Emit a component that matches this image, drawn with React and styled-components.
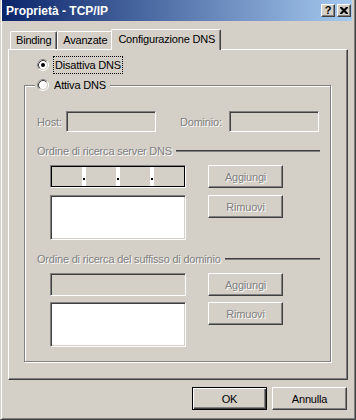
import React from "react";
import styled, { createGlobalStyle } from "styled-components";

const GlobalStyle = createGlobalStyle`
  html, body {
    margin: 0;
    padding: 0;
    background: #d4d0c8;
  }
  body {
    font-family: "Liberation Sans", Arial, sans-serif;
    font-size: 11px;
    letter-spacing: -0.2px;
    color: #000;
  }
  * {
    box-sizing: border-box;
  }
`;

const Radio = ({ checked }) => (
  <RadioMark width="12" height="12" viewBox="0 0 12 12">
    <circle cx="6" cy="6" r="4.2" fill="#fff" />
    <circle cx="6" cy="6" r="5.5" fill="none" stroke="#fff" />
    <path d="M9.89 2.11 A5.5 5.5 0 0 0 2.11 9.89" fill="none" stroke="#808080" />
    <circle cx="6" cy="6" r="4.5" fill="none" stroke="#d4d0c8" />
    <path d="M9.18 2.82 A4.5 4.5 0 0 0 2.82 9.18" fill="none" stroke="#404040" />
    {checked && <circle cx="6" cy="6" r="2" fill="#000" />}
  </RadioMark>
);

const IpAddress = () => (
  <IpBox>
    <IpSegment />
    <IpDot />
    <IpSegment />
    <IpDot />
    <IpSegment />
    <IpDot />
    <IpSegment />
  </IpBox>
);

const App = () => {
  return (
    <>
      <GlobalStyle />
      <Window>
        <TitleBar>
          <Title>Proprietà - TCP/IP</Title>
          <CaptionButton>?</CaptionButton>
          <CaptionButton $gap>
            <svg width="8" height="7" viewBox="0 0 8 7">
              <path
                d="M0 0h2l2 2 2-2h2v1L5.5 3.5 8 6v1H6L4 5 2 7H0V6l2.5-2.5L0 1z"
                fill="#000"
              />
            </svg>
          </CaptionButton>
        </TitleBar>

        <Body>
          <TabStrip>
            <Tab>Binding</Tab>
            <Tab>Avanzate</Tab>
            <Tab $active>Configurazione DNS</Tab>
          </TabStrip>

          <Panel>
            <RadioRow>
              <Radio checked />
              <RadioLabel $focused>Disattiva DNS</RadioLabel>
            </RadioRow>

            <GroupBox>
              <Legend>
                <Radio />
                <RadioLabel>Attiva DNS</RadioLabel>
              </Legend>

              <FieldRow $top={19}>
                <DisabledLabel $width={29}>Host:</DisabledLabel>
                <TextBox $width={90} />
                <DisabledLabel $width={49} $indent={24}>
                  Dominio:
                </DisabledLabel>
                <TextBox $width={90} />
              </FieldRow>

              <SectionHeader $top={12}>
                <DisabledLabel>Ordine di ricerca server DNS</DisabledLabel>
                <SectionRule />
              </SectionHeader>

              <ControlRow $top={7}>
                <IpAddress />
                <PushButton disabled>Aggiungi</PushButton>
              </ControlRow>
              <ControlRow $top={7}>
                <ListBox />
                <PushButton disabled>Rimuovi</PushButton>
              </ControlRow>

              <SectionHeader $top={12}>
                <DisabledLabel>Ordine di ricerca del suffisso di dominio</DisabledLabel>
                <SectionRule />
              </SectionHeader>

              <ControlRow $top={7}>
                <TextBox $width={136} $height={23} />
                <PushButton disabled>Aggiungi</PushButton>
              </ControlRow>
              <ControlRow $top={6}>
                <ListBox />
                <PushButton disabled>Rimuovi</PushButton>
              </ControlRow>
            </GroupBox>
          </Panel>

          <Footer>
            <PushButton $default>OK</PushButton>
            <PushButton>Annulla</PushButton>
          </Footer>
        </Body>
      </Window>
    </>
  );
};

export default App;

const Window = styled.div`
  width: 356px;
  height: 420px;
  display: flex;
  flex-direction: column;
  background: #d4d0c8;
  border-left: 1px solid #d4d0c8;
  border-right: 1px solid #404040;
  border-bottom: 1px solid #404040;
  box-shadow: inset 1px 0 #fff, inset -1px -1px #808080;
  padding: 0 3px 0 1px;
`;

const TitleBar = styled.div`
  height: 21px;
  flex: none;
  display: flex;
  align-items: center;
  padding: 0 1px 0 4px;
  background: linear-gradient(90deg, #0a246a 0%, #a6caf0 100%);
  color: #fff;
`;

const Title = styled.div`
  flex: 1;
  font-weight: bold;
  font-size: 12px;
  letter-spacing: 0;
`;

const CaptionButton = styled.div`
  width: 14px;
  height: 13px;
  margin-left: ${(p) => (p.$gap ? "2px" : "0")};
  display: flex;
  align-items: center;
  justify-content: center;
  background: #d4d0c8;
  color: #000;
  font-weight: bold;
  font-size: 11px;
  letter-spacing: 0;
  line-height: 1;
  border-top: 1px solid #fff;
  border-left: 1px solid #fff;
  border-right: 1px solid #404040;
  border-bottom: 1px solid #404040;
  box-shadow: inset -1px -1px #808080;
`;

const Body = styled.div`
  flex: 1;
  display: flex;
  flex-direction: column;
  padding: 8px 0 0 6px;
`;

const TabStrip = styled.div`
  height: 20px;
  display: flex;
  align-items: flex-end;
  padding-left: 2px;
`;

const Tab = styled.div`
  position: relative;
  z-index: ${(p) => (p.$active ? 2 : 1)};
  height: ${(p) => (p.$active ? "21px" : "18px")};
  margin: ${(p) => (p.$active ? "0 -2px -1px -2px" : "0")};
  padding: ${(p) => (p.$active ? "3px 5px 0 6px" : "2px 5px 0 5px")};
  background: #d4d0c8;
  border-top: 1px solid #fff;
  border-left: 1px solid #fff;
  border-right: 1px solid #404040;
  border-top-left-radius: 2px;
  border-top-right-radius: 2px;
  box-shadow: inset -1px 0 #808080;
  white-space: nowrap;
  line-height: 13px;
`;

const Panel = styled.div`
  width: 340px;
  height: 331px;
  flex: none;
  display: flex;
  flex-direction: column;
  padding: 6px 0 0 0;
  border-top: 1px solid #fff;
  border-left: 1px solid #fff;
  border-right: 1px solid #404040;
  border-bottom: 1px solid #404040;
  box-shadow: inset -1px -1px #808080;
`;

const RadioRow = styled.div`
  height: 18px;
  display: flex;
  align-items: center;
  gap: 4px;
  margin-left: 28px;
`;

const RadioMark = styled.svg`
  flex: none;
  display: block;
`;

const RadioLabel = styled.span`
  height: 18px;
  display: flex;
  align-items: center;
  padding: 0 1px;
  border: 1px dotted ${(p) => (p.$focused ? "#000" : "transparent")};
  white-space: nowrap;
`;

const GroupBox = styled.div`
  width: 307px;
  margin: 11px 0 0 15px;
  padding: 0 10px 14px 12px;
  display: flex;
  flex-direction: column;
  border: 1px solid #808080;
  box-shadow: inset 1px 1px #fff, 1px 1px #fff;
`;

const Legend = styled.div`
  align-self: flex-start;
  height: 14px;
  margin: -8px 0 0 -2px;
  padding: 0 4px 0 2px;
  display: flex;
  align-items: center;
  gap: 4px;
  background: #d4d0c8;

  ${RadioLabel} {
    border: none;
    padding: 0 0 0 1px;
  }
`;

const FieldRow = styled.div`
  margin-top: ${(p) => p.$top}px;
  display: flex;
  align-items: center;
`;

const DisabledLabel = styled.span`
  flex: none;
  width: ${(p) => (p.$width ? `${p.$width}px` : "auto")};
  margin-left: ${(p) => p.$indent || 0}px;
  color: #808080;
  text-shadow: 1px 1px 0 #fff;
  white-space: nowrap;
`;

const sunken = `
  border-top: 1px solid #808080;
  border-left: 1px solid #808080;
  border-right: 1px solid #fff;
  border-bottom: 1px solid #fff;
  box-shadow: inset 1px 1px #404040, inset -1px -1px #d4d0c8;
`;

const TextBox = styled.div`
  flex: none;
  width: ${(p) => p.$width}px;
  height: ${(p) => p.$height || 21}px;
  background: #d4d0c8;
  ${sunken}
`;

const SectionHeader = styled.div`
  margin-top: ${(p) => p.$top}px;
  height: 14px;
  display: flex;
  align-items: center;
`;

const SectionRule = styled.div`
  flex: 1;
  margin-left: 4px;
  border-top: 1px solid #404040;
  border-bottom: 1px solid #808080;
`;

const ControlRow = styled.div`
  margin-top: ${(p) => p.$top}px;
  padding-left: 13px;
  display: flex;
  align-items: flex-start;
  gap: 22px;
`;

const IpBox = styled.div`
  flex: none;
  width: 136px;
  height: 23px;
  display: grid;
  grid-template-columns: 1fr 4px 1fr 4px 1fr 4px 1fr;
  background: #d4d0c8;
  border-top: 1px solid #808080;
  border-left: 1px solid #808080;
  border-right: 1px solid #fff;
  border-bottom: 1px solid #fff;
  box-shadow: inset 0 0 0 1px #000;
  padding: 1px;
`;

const IpSegment = styled.div``;

const IpDot = styled.div`
  background: #fff;
  position: relative;

  &::after {
    content: "";
    position: absolute;
    left: 1px;
    top: 11px;
    width: 2px;
    height: 2px;
    background: #000;
  }
`;

const ListBox = styled.div`
  flex: none;
  width: 136px;
  height: 45px;
  background: #fff;
  ${sunken}
`;

const PushButton = styled.button`
  flex: none;
  width: 75px;
  height: 23px;
  padding: 0;
  font-family: "Liberation Sans", Arial, sans-serif;
  font-size: 11px;
  letter-spacing: -0.2px;
  color: ${(p) => (p.disabled ? "#808080" : "#000")};
  text-shadow: ${(p) => (p.disabled ? "1px 1px 0 #fff" : "none")};
  background: #d4d0c8;
  border-top: 1px solid ${(p) => (p.$default ? "#000" : "#fff")};
  border-left: 1px solid ${(p) => (p.$default ? "#000" : "#fff")};
  border-right: 1px solid ${(p) => (p.$default ? "#000" : "#404040")};
  border-bottom: 1px solid ${(p) => (p.$default ? "#000" : "#404040")};
  box-shadow: ${(p) =>
    p.$default
      ? "inset 1px 1px #fff, inset -1px -1px #404040, inset -2px -2px #808080"
      : "inset -1px -1px #808080, inset 1px 1px #d4d0c8"};
`;

const Footer = styled.div`
  display: flex;
  justify-content: flex-end;
  gap: 5px;
  margin-top: 7px;
  padding-right: 5px;
`;
